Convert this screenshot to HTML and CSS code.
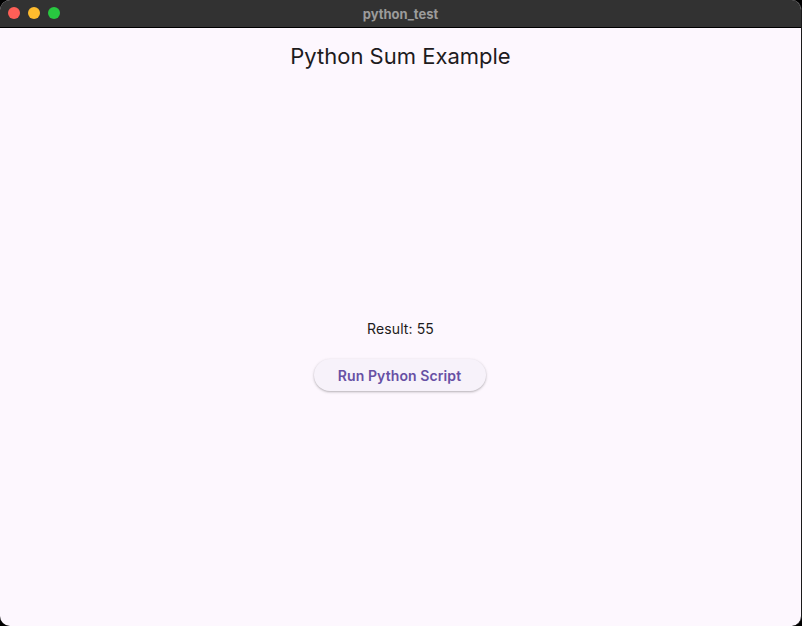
FILE: index.html
```html
<!DOCTYPE html>
<html lang="en">
<head>
  <meta charset="UTF-8">
  <meta name="viewport" content="width=device-width, initial-scale=1.0">
  <title>python_test</title>
  <link rel="stylesheet" href="styles.css">
</head>
<body>
<div class="window">
  <div class="titlebar">
    <div class="lights">
      <span class="light red"></span>
      <span class="light yellow"></span>
      <span class="light green"></span>
    </div>
    <div class="win-title">python_test</div>
  </div>
  <div class="app">
    <header class="appbar">
      <h1>Python Sum Example</h1>
    </header>
    <main class="body">
      <p class="result">Result: 55</p>
      <button class="run-btn">Run Python Script</button>
    </main>
  </div>
</div>
</body>
</html>
```

FILE: styles.css
```css
:root {
  --surface: #fdf7fe;
  --primary: #6750a4;
  --text: #1d1b20;
  --btn-bg: #f7f2fa;
}
html, body {
  margin: 0;
  height: 100%;
  background: #000;
}
body {
  font-family: Inter, Roboto, "Noto Sans", sans-serif;
  color: var(--text);
}
.window {
  height: 626px;
  width: 802px;
  box-sizing: border-box;
  border-radius: 10px;
  overflow: hidden;
  display: flex;
  flex-direction: column;
  background: var(--surface);
  border-right: 1px solid #1a1a1a;
}
.titlebar {
  height: 27px;
  flex: none;
  background: #323232;
  border-bottom: 1px solid #000;
  position: relative;
  display: flex;
  align-items: center;
  justify-content: center;
}
.lights {
  position: absolute;
  left: 8px;
  top: 7px;
  display: flex;
  gap: 8px;
}
.light {
  width: 12px;
  height: 12px;
  border-radius: 50%;
  display: block;
}
.red { background: #fe5f57; }
.yellow { background: #febc2e; }
.green { background: #28c840; }
.win-title {
  font-family: Inter, sans-serif;
  font-size: 13px;
  font-weight: 700;
  color: #9b9b9b;
}
.app {
  flex: 1;
  display: flex;
  flex-direction: column;
}
.appbar {
  height: 56px;
  flex: none;
  display: flex;
  align-items: center;
  justify-content: center;
}
.appbar h1 {
  margin: 0;
  font-size: 22px;
  font-weight: 400;
  color: var(--text);
}
.body {
  flex: 1;
  display: flex;
  flex-direction: column;
  align-items: center;
  justify-content: center;
}
.result {
  margin: 0 0 20px;
  font-size: 14px;
  line-height: 20px;
  letter-spacing: 0.1px;
}
.run-btn {
  height: 32px;
  width: 172px;
  margin-right: 2px;
  border: none;
  border-radius: 16px;
  background: var(--btn-bg);
  color: var(--primary);
  font-family: inherit;
  font-size: 14px;
  font-weight: 600;
  letter-spacing: 0.1px;
  box-shadow: 0 1px 2px rgba(0,0,0,0.22), 0 1px 3px 1px rgba(0,0,0,0.06);
  cursor: pointer;
}
```
